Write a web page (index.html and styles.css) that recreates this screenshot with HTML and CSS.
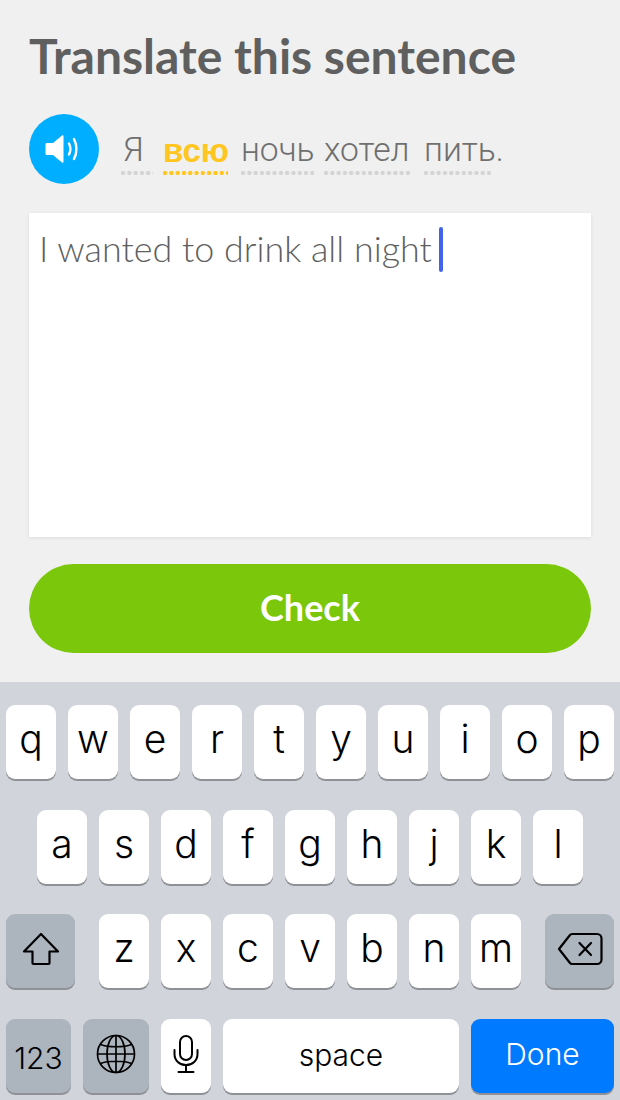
FILE: index.html
```html
<!DOCTYPE html>
<html lang="en">
<head>
    <meta charset="UTF-8">
    <title>Translate this sentence</title>
    <link rel="stylesheet" href="styles.css">
</head>
<body>
    <main class="lesson">
        <h1>Translate this sentence</h1>

        <div class="prompt">
            <button class="speaker" aria-label="Play">
                <svg width="36" height="32" viewBox="0 0 36 32">
                    <path d="M2 10h6L17 2.500c.8-.5 1.500 0 1.500.8v25.400c0 .8-.7 1.300-1.500.8L8 22H2c-1 0-1.500-.6-1.500-1.500v-9c0-.9.5-1.500 1.500-1.500z" fill="#fff"/>
                    <path d="M24 10.500c1.800 3.500 1.800 7.500 0 11" fill="none" stroke="#fff" stroke-width="2.400" stroke-linecap="round"/>
                    <path d="M29 6c3.200 6 3.200 14 0 20" fill="none" stroke="#fff" stroke-width="2.400" stroke-linecap="round"/>
                </svg>
            </button>
            <div class="sentence">
                <span class="word w-ya">Я</span>
                <span class="word word-active w-vsyu">всю</span>
                <span class="word w-noch">ночь</span>
                <span class="word w-hotel">хотел</span>
                <span class="word w-pit">пить.</span>
            </div>
        </div>

        <div class="answer">
            <span class="answer-text">I wanted to drink all night</span><span class="caret"></span>
        </div>

        <button class="check">Check</button>
    </main>

    <section class="keyboard">
        <div class="row">
            <div class="key">q</div><div class="key">w</div><div class="key">e</div><div class="key">r</div><div class="key">t</div><div class="key">y</div><div class="key">u</div><div class="key">i</div><div class="key">o</div><div class="key">p</div>
        </div>
        <div class="row row-inset">
            <div class="key">a</div><div class="key">s</div><div class="key">d</div><div class="key">f</div><div class="key">g</div><div class="key">h</div><div class="key">j</div><div class="key">k</div><div class="key">l</div>
        </div>
        <div class="row">
            <div class="key key-dark key-shift">
                <svg width="38" height="34" viewBox="0 0 38 34">
                    <path d="M19 2 L36 19.500 H27.500 V31 a1 1 0 0 1 -1 1 H11.500 a1 1 0 0 1 -1 -1 V19.500 H2 Z" fill="none" stroke="#000" stroke-width="2.200" stroke-linejoin="round"/>
                </svg>
            </div>
            <div class="letters">
                <div class="key">z</div><div class="key">x</div><div class="key">c</div><div class="key">v</div><div class="key">b</div><div class="key">n</div><div class="key">m</div>
            </div>
            <div class="key key-dark key-shift">
                <svg width="46" height="34" viewBox="0 0 46 34">
                    <path d="M15 2 H40 a4.500 4.500 0 0 1 4.500 4.500 V27.500 A4.500 4.500 0 0 1 40 32 H15 a3 3 0 0 1 -2 -1 L2 17 L13 3 a3 3 0 0 1 2 -1 Z" fill="none" stroke="#000" stroke-width="2.200" stroke-linejoin="round"/>
                    <path d="M22.500 11 L34 23 M34 11 L22.500 23" fill="none" stroke="#000" stroke-width="2.200" stroke-linecap="round"/>
                </svg>
            </div>
        </div>
        <div class="row">
            <div class="key key-dark key-123">123</div>
            <div class="key key-dark key-globe">
                <svg width="40" height="40" viewBox="0 0 40 40" fill="none" stroke="#000" stroke-width="1.700">
                    <circle cx="20" cy="20" r="18.500"/>
                    <ellipse cx="20" cy="20" rx="9" ry="18.500"/>
                    <path d="M20 1.500V38.500M1.500 20H38.500M4.500 10.500C12 13.500 28 13.500 35.500 10.500M4.500 29.500C12 26.500 28 26.500 35.500 29.500"/>
                </svg>
            </div>
            <div class="key key-mic">
                <svg width="26" height="38" viewBox="0 0 26 38" fill="none" stroke="#000" stroke-width="2">
                    <rect x="7" y="1" width="12" height="24" rx="6"/>
                    <path d="M1.500 15V19C1.500 25.500 6.500 30 13 30C19.500 30 24.500 25.500 24.500 19V15M13 30V37M5.500 37H20.500" stroke-linecap="round"/>
                </svg>
            </div>
            <div class="key key-space">space</div>
            <div class="key key-done">Done</div>
        </div>
    </section>
</body>
</html>
```

FILE: styles.css
```css
* {
    box-sizing: border-box;
}

body {
    margin: 0;
    width: 620px;
    height: 1100px;
    overflow: hidden;
    background: #d1d4db;
    font-family: "Lato", sans-serif;
}

.lesson {
    height: 682px;
    padding: 31px 29px 0;
    background: #f0f0f0;
}

h1 {
    margin: 0;
    height: 49px;
    color: #5f5f5f;
    font-size: 48px;
    line-height: 50px;
    font-weight: 700;
}

.prompt {
    display: flex;
    align-items: center;
    margin-top: 34px;
    height: 70px;
}

.speaker {
    display: flex;
    justify-content: center;
    align-items: center;
    flex: none;
    width: 70px;
    height: 70px;
    padding: 0 2px 0 0;
    border: none;
    border-radius: 50%;
    background: #00aeff;
}

.sentence {
    display: flex;
    margin-left: 22px;
    margin-top: 4px;
    font-family: "Roboto", sans-serif;
    font-size: 33.600px;
    font-weight: 300;
    color: #6f6f6f;
    white-space: nowrap;
}

.word {
    padding-top: 1px;
    padding-bottom: 4px;
    line-height: 42px;
    background-image: radial-gradient(circle at 2px 2px, #d4d4d4 2px, transparent 2.300px);
    background-size: 6.300px 4px;
    background-repeat: repeat-x;
    background-position: 0 bottom;
}

.w-ya { width: 32px; margin-right: 10px; padding-left: 2px; }
.w-vsyu { width: 65px; margin-right: 13px; }
.w-noch { width: 73px; margin-right: 10px; }
.w-hotel { width: 87px; margin-right: 13px; }
.w-pit { width: 67px; }

.word-active {
    color: #ffc61f;
    font-family: "Liberation Sans", sans-serif;
    font-size: 33px;
    font-weight: 700;
    padding-top: 2px;
    padding-bottom: 3px;
    background-image: radial-gradient(circle at 2px 2px, #ffc61f 2px, transparent 2.300px);
}

.answer {
    display: flex;
    align-items: flex-start;
    margin-top: 29px;
    height: 324px;
    padding: 14px 10px;
    background: #fff;
    box-shadow: 0 1px 4px rgba(0, 0, 0, 0.08);
}

.answer-text {
    color: #5f5f5f;
    font-size: 35.900px;
    line-height: 44px;
    font-weight: 300;
}

.caret {
    width: 4px;
    height: 45px;
    margin-left: 7px;
    border-radius: 2px;
    background: #4263ec;
}

.check {
    display: block;
    width: 100%;
    height: 89px;
    margin-top: 27px;
    padding-bottom: 4px;
    border: none;
    border-radius: 45px;
    background: #7ac70c;
    color: #fff;
    font-family: "Lato", sans-serif;
    font-size: 36px;
    font-weight: 700;
}

.keyboard {
    height: 418px;
    padding: 23px 6px 0;
}

.row {
    display: flex;
    gap: 12px;
    height: 74px;
    margin-bottom: 31px;
}

.row-inset {
    margin-bottom: 30px;
    padding-left: 31px;
}

.letters {
    display: flex;
    gap: 12px;
    margin: 0 12px;
}

.key {
    display: flex;
    justify-content: center;
    align-items: center;
    width: 50px;
    height: 74px;
    padding-bottom: 7px;
    border-radius: 9px;
    background: #fff;
    box-shadow: 0 2px 0 #8f9196;
    color: #000;
    font-family: "Inter", sans-serif;
    font-size: 39px;
    font-weight: 300;
}

.key-dark {
    background: #acb4be;
}

.key-shift {
    width: 69px;
    padding-bottom: 4px;
}

.key-123 {
    width: 65px;
    padding: 4px 0 0;
    font-size: 30px;
}

.key-globe {
    width: 66px;
    padding-bottom: 4px;
}

.key-mic {
    padding-bottom: 4px;
}

.key-space {
    width: 236px;
    padding-bottom: 3px;
    font-size: 30px;
}

.key-done {
    width: 143px;
    padding-bottom: 5px;
    background: #007aff;
    color: #fff;
    font-size: 30px;
}
```
